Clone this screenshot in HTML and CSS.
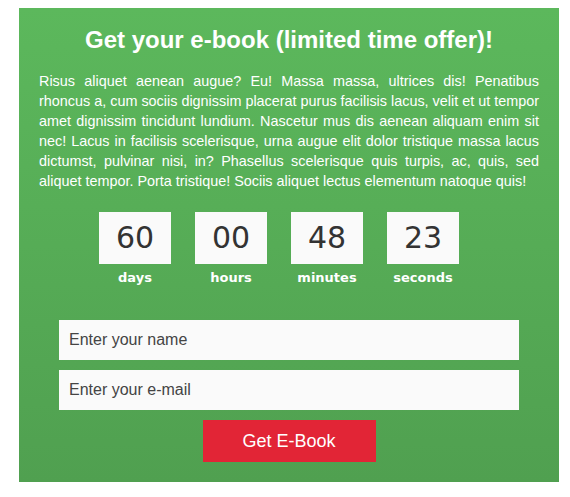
FILE: index.html
```html
<!DOCTYPE html>
<html>
<head>
  <meta name="viewport" content="width=device-width, initial-scale=1.0">
  <title>Get your e-book</title>
  <link rel="stylesheet" href="styles.css">
</head>
<body>
  <div class="offer">
    <h1>Get your e-book (limited time offer)!</h1>
    <p class="intro">Risus aliquet aenean augue? Eu! Massa massa, ultrices dis! Penatibus rhoncus a, cum sociis dignissim placerat purus facilisis lacus, velit et ut tempor amet dignissim tincidunt lundium. Nascetur mus dis aenean aliquam enim sit nec! Lacus in facilisis scelerisque, urna augue elit dolor tristique massa lacus dictumst, pulvinar nisi, in? Phasellus scelerisque quis turpis, ac, quis, sed aliquet tempor. Porta tristique! Sociis aliquet lectus elementum natoque quis!</p>

    <div class="countdown">
      <div class="unit">
        <div class="number">60</div>
        <div class="label">days</div>
      </div>
      <div class="unit">
        <div class="number">00</div>
        <div class="label">hours</div>
      </div>
      <div class="unit">
        <div class="number">48</div>
        <div class="label">minutes</div>
      </div>
      <div class="unit">
        <div class="number">23</div>
        <div class="label">seconds</div>
      </div>
    </div>

    <form class="signup" onsubmit="return false">
      <input type="text" placeholder="Enter your name" />
      <input type="email" placeholder="Enter your e-mail" />
      <button type="submit">Get E-Book</button>
    </form>
  </div>
</body>
</html>
```

FILE: styles.css
```css
body {
  margin: 8px;
  font-family: "Liberation Sans", Arial, sans-serif;
}

.offer {
  width: 540px;
  margin-left: 11px;
  padding: 19px 20px 20px;
  box-sizing: border-box;
  background-image: linear-gradient(to bottom, #5cb85c 0%, #50a050 100%);
  color: #ffffff;
}

h1 {
  margin: 0 0 18px;
  font-size: 24px;
  line-height: 26px;
  text-align: center;
}

.intro {
  margin: 0;
  font-size: 0.9em;
  line-height: 20px;
  text-align: justify;
}

.countdown {
  display: flex;
  justify-content: center;
  gap: 24px;
  margin-top: 21px;
  padding-right: 20px;
}

.unit {
  width: 72px;
  text-align: center;
}

.number {
  height: 52px;
  line-height: 52px;
  background-color: #fafafa;
  color: #333333;
  font-family: "DejaVu Sans", Verdana, sans-serif;
  font-size: 30px;
}

.label {
  margin-top: 6px;
  font-family: "DejaVu Sans", Verdana, sans-serif;
  font-weight: bold;
  font-size: 13px;
  line-height: 16px;
}

.signup {
  display: flex;
  flex-direction: column;
  align-items: center;
  gap: 10px;
  margin: 34px 0 0;
}

.signup input {
  width: 460px;
  height: 40px;
  padding: 0 10px;
  box-sizing: border-box;
  border: none;
  outline: none;
  background-color: #fafafa;
  color: #444444;
  font-family: "Liberation Sans", Arial, sans-serif;
  font-size: 16px;
}

.signup input::placeholder {
  color: #444444;
}

.signup button {
  width: 173px;
  height: 42px;
  border: none;
  background-color: #e22536;
  color: #ffffff;
  font-family: "Liberation Sans", Arial, sans-serif;
  font-size: 18px;
  cursor: pointer;
}
```
